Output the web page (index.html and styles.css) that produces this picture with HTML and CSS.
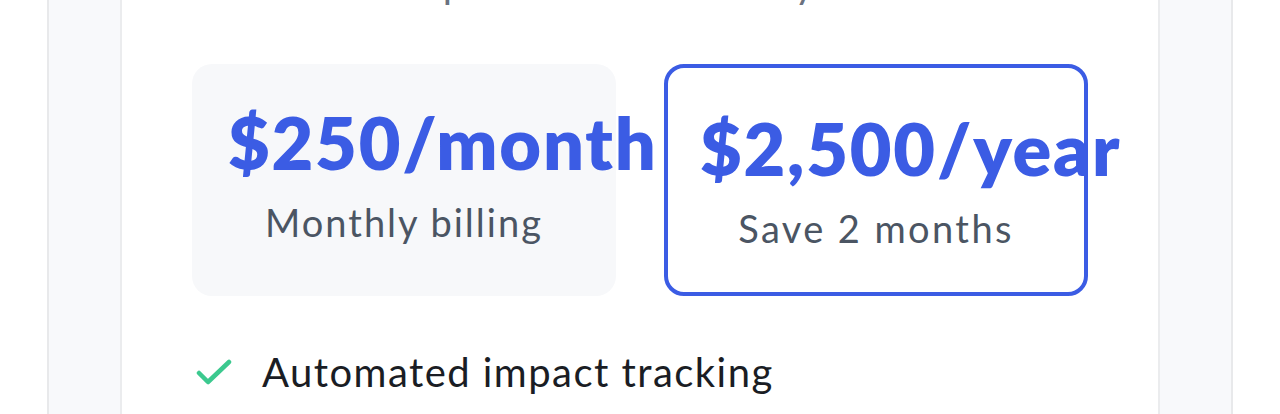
FILE: index.html
```html
<!DOCTYPE html>
<html lang="en">
<head>
<meta charset="utf-8">
<title>Pricing</title>
<link rel="stylesheet" href="styles.css">
</head>
<body>
<div class="frame">
  <div class="card">
    <h2 class="heading">Choose the plan that works for you</h2>
    <div class="options">
      <div class="opt">
        <div class="price">$250/month</div>
        <div class="sub">Monthly billing</div>
      </div>
      <div class="opt opt-active">
        <div class="price">$2,500/year</div>
        <div class="sub sub-save">Save 2 months</div>
      </div>
    </div>
    <ul class="features">
      <li class="feature">
        <svg class="check" viewBox="0 0 36 28" width="36" height="28" aria-hidden="true"><path d="M3 15 L12 24 L33 4" fill="none" stroke="#3cc98f" stroke-width="4.5" stroke-linecap="round" stroke-linejoin="round"/></svg>
        <span>Automated impact tracking</span>
      </li>
    </ul>
  </div>
</div>
</body>
</html>
```

FILE: styles.css
```css
* { box-sizing: border-box; }
html, body { margin: 0; padding: 0; background: #ffffff; }
body {
  font-family: "Lato", "Liberation Sans", sans-serif;
  height: 414px;
  overflow: hidden;
}
.frame {
  display: flow-root;
  margin-left: 47px;
  width: 1186px;
  height: 414px;
  background: #f8f9fb;
  border-left: 2px solid #e8e9eb;
  border-right: 2px solid #e8e9eb;
  padding: 0 71px;
}
.card {
  display: flow-root;
  height: 100%;
  background: #ffffff;
  border-left: 2px solid #ebecee;
  border-right: 2px solid #ebecee;
  padding: 0 70px;
}
.heading {
  margin: -41px 0 0 0;
  padding-left: 33px;
  font-size: 40px;
  line-height: 48px;
  font-weight: 400;
  letter-spacing: 0.6px;
  color: #6b7280;
  white-space: nowrap;
}
.options {
  margin-top: 57px;
  display: grid;
  grid-template-columns: 424px 424px;
  gap: 48px;
}
.opt {
  height: 232px;
  border-radius: 20px;
  border: 4px solid transparent;
  background: #f7f8fa;
  padding: 34px 32px 0;
  text-align: center;
}
.opt-active {
  background: #ffffff;
  border-color: #3b5ce4;
  padding-top: 40px;
}
.price {
  font-size: 72px;
  line-height: 80px;
  font-weight: 800;
  letter-spacing: 1.8px;
  color: #3b5ce4;
  white-space: nowrap;
}
.sub {
  margin-top: 16px;
  font-size: 38px;
  line-height: 48px;
  letter-spacing: 2px;
  color: #4b5563;
}
.sub-save { letter-spacing: 2.4px; }
.features {
  list-style: none;
  margin: 52px 0 0;
  padding: 0 0 0 4px;
}
.feature {
  display: flex;
  align-items: center;
  gap: 30px;
  font-size: 40px;
  line-height: 48px;
  letter-spacing: 1.45px;
  color: #1a1d24;
}
.check { flex: none; }
```
